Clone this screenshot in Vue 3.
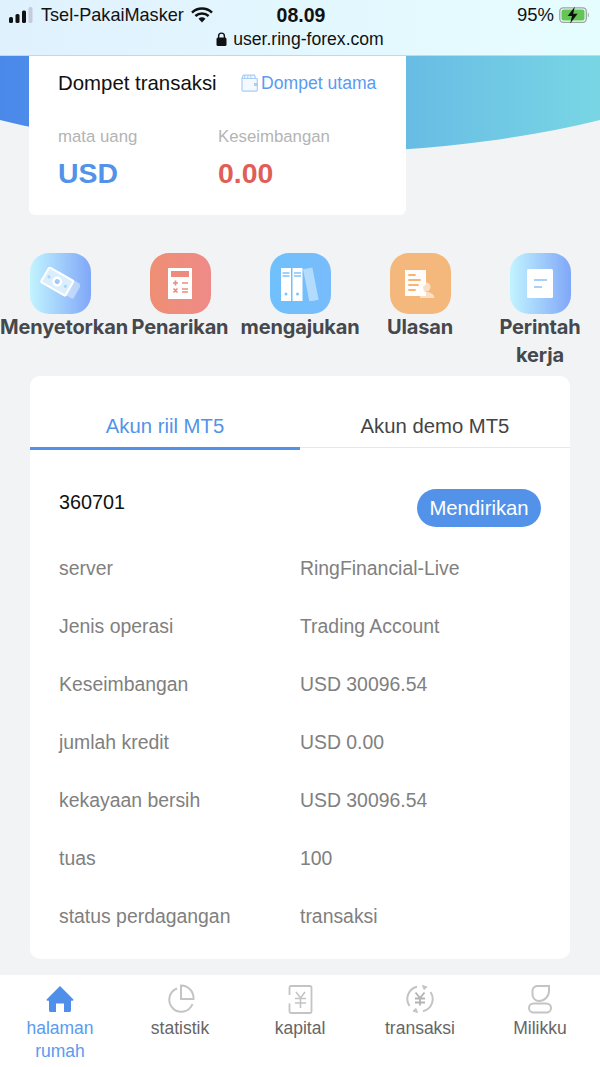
<script setup>
const actions = [
  { label: 'Menyetorkan', kind: 'cash' },
  { label: 'Penarikan', kind: 'calc' },
  { label: 'mengajukan', kind: 'file' },
  { label: 'Ulasan', kind: 'review' },
  { label: 'Perintah kerja', kind: 'order' }
]
const rows = [
  ['server', 'RingFinancial-Live'],
  ['Jenis operasi', 'Trading Account'],
  ['Keseimbangan', 'USD 30096.54'],
  ['jumlah kredit', 'USD 0.00'],
  ['kekayaan bersih', 'USD 30096.54'],
  ['tuas', '100'],
  ['status perdagangan', 'transaksi']
]
</script>

<template>
  <div class="page">
    <header class="browser">
      <div class="status">
        <div class="carrier">
          <svg class="signal" width="26" height="18" viewBox="0 0 26 18">
            <rect x="0" y="11" width="4" height="6" rx="1.5" fill="#111" />
            <rect x="6.5" y="8" width="4" height="9" rx="1.5" fill="#111" />
            <rect x="13" y="4.500" width="4" height="12.500" rx="1.500" fill="#111" />
            <rect x="19.500" y="1" width="4" height="16" rx="1.500" fill="#c3ccd8" />
          </svg>
          <span>Tsel-PakaiMasker</span>
          <svg class="wifi" width="22" height="16" viewBox="0 0 22 16">
            <path d="M1 5.600a14.500 14.500 0 0 1 20 0M4.400 9a9.700 9.700 0 0 1 13.200 0" fill="none" stroke="#111" stroke-width="2.500" />
            <path d="M7.500 11.700a5 5 0 0 1 7 0L11 15.500z" fill="#111" />
          </svg>
        </div>
        <span class="clock">08.09</span>
        <div class="power">
          <span>95%</span>
          <svg width="32" height="18" viewBox="0 0 32 18">
            <rect x="0.800" y="1.800" width="26.500" height="14.500" rx="3.500" fill="none" stroke="#9aa5a0" stroke-width="1.300" />
            <rect x="2.500" y="3.500" width="23" height="11" rx="2" fill="#62c554" />
            <path d="M28.800 6.500c1.400.4 1.400 4.600 0 5z" fill="#9aa5a0" />
            <path d="M15.800 0.800 8.600 10h4.400l-1.800 7.500 7.400-9.700h-4.400z" fill="#111" />
          </svg>
        </div>
      </div>
      <div class="address">
        <svg width="11" height="14" viewBox="0 0 11 14">
          <path d="M2.600 6V4a2.900 2.900 0 0 1 5.800 0v2" fill="none" stroke="#111" stroke-width="1.400" />
          <rect x="0.500" y="5.500" width="10" height="8.500" rx="1.500" fill="#111" />
        </svg>
        <span>user.ring-forex.com</span>
      </div>
    </header>

    <section class="hero">
      <div class="wallet">
        <div class="wallet-head">
          <span class="wallet-title">Dompet transaksi</span>
          <span class="wallet-link">
            <svg width="17" height="18" viewBox="0 0 17 18">
              <path d="M1 4.500h14.500a.8.8 0 0 1 .8.800v11a.8.8 0 0 1-.8.800H2a1 1 0 0 1-1-1zM1 4.500 1.800 2a1.200 1.200 0 0 1 1.200-.800h10.500l1 3.300" fill="#f3f9ff" stroke="#a9cdf5" stroke-width="1.200" />
              <path d="M4 1.500 3.500 4M7 1.500 6.600 4M10 1.500 9.800 4" stroke="#a9cdf5" stroke-width="1" />
              <rect x="13" y="9" width="3.500" height="3" fill="#a9cdf5" />
            </svg>
            Dompet utama
          </span>
        </div>
        <div class="wallet-stats">
          <div class="stat stat-currency">
            <span class="stat-label">mata uang</span>
            <span class="stat-value blue">USD</span>
          </div>
          <div class="stat">
            <span class="stat-label">Keseimbangan</span>
            <span class="stat-value red">0.00</span>
          </div>
        </div>
      </div>
    </section>

    <nav class="actions">
      <div v-for="a in actions" :key="a.label" class="action">
        <div class="tile" :class="'tile-' + a.kind">
          <svg v-if="a.kind === 'cash'" width="40" height="34" viewBox="0 0 40 34">
            <g transform="rotate(30 25 19)">
              <rect x="11" y="10" width="27" height="16" rx="1" fill="#fff" opacity=".4" stroke="#fff" stroke-width="1" />
            </g>
            <g transform="rotate(30 17 15)">
              <rect x="3" y="6" width="28" height="17" rx="1" fill="#dbeefe" stroke="#fff" stroke-width="2" />
              <circle cx="17" cy="14.500" r="5" fill="#fff" />
              <circle cx="17" cy="14.500" r="2.500" fill="#9cc9f8" />
              <circle cx="7.500" cy="14.500" r="1.600" fill="#a9d4fb" />
              <circle cx="26.500" cy="14.500" r="1.600" fill="#a9d4fb" />
            </g>
          </svg>
          <svg v-else-if="a.kind === 'calc'" width="24" height="31" viewBox="0 0 24 31">
            <rect width="24" height="31" fill="#fff" />
            <rect x="3" y="3" width="18" height="6" fill="#ee8b7c" />
            <path d="M5 15h5M7.500 12.500v5M14 15h6M5.500 20.500l4 4M9.500 20.500l-4 4M14 21h6M14 24h6" stroke="#ee8b7c" stroke-width="1.700" />
          </svg>
          <svg v-else-if="a.kind === 'file'" width="38" height="34" viewBox="0 0 38 34">
            <rect x="0" y="1" width="10" height="33" fill="#fff" />
            <rect x="11.500" y="1" width="10" height="33" fill="#fff" />
            <rect x="25" y="1" width="9.500" height="33" fill="#fff" opacity=".45" transform="rotate(-11 30 17)" />
            <path d="M1.500 6h7M1.500 9h7M13 6h7M13 9h7" stroke="#7cc4fa" stroke-width="1.300" />
            <circle cx="5" cy="27" r="1.500" fill="#7cc4fa" />
            <circle cx="16.500" cy="27" r="1.500" fill="#7cc4fa" />
          </svg>
          <svg v-else-if="a.kind === 'review'" width="30" height="28" viewBox="0 0 30 28">
            <path d="M0 0h21v14l-3 3 1 4 2 1v4H0z" fill="#fff" opacity=".96" />
            <path d="M4 5h6M4 10h11M4 15h9M4 20h6" stroke="#f4b676" stroke-width="1.800" stroke-linecap="round" />
            <circle cx="21" cy="17" r="4.500" fill="#fff" opacity=".55" />
            <path d="M15 28c0-5 3-6 6-6s8 1 8.500 6z" fill="#fff" opacity=".55" />
          </svg>
          <svg v-else width="26" height="29" viewBox="0 0 26 29">
            <rect width="26" height="29" rx="1.500" fill="#fff" />
            <path d="M7 11h13M7 18h8" stroke="#a9cffb" stroke-width="2" />
          </svg>
        </div>
        <span class="action-label">{{ a.label }}</span>
      </div>
    </nav>

    <main class="account">
      <div class="tabs">
        <div class="tab active">Akun riil MT5</div>
        <div class="tab">Akun demo MT5</div>
      </div>
      <div class="account-head">
        <span class="account-id">360701</span>
        <span class="pill">Mendirikan</span>
      </div>
      <div v-for="r in rows" :key="r[0]" class="row">
        <span class="row-label">{{ r[0] }}</span>
        <span class="row-value">{{ r[1] }}</span>
      </div>
    </main>

    <footer class="tabbar">
      <div class="nav-item current">
        <svg width="30" height="30" viewBox="0 0 30 30">
          <path d="M15 2 1.800 15.200c-.6.700-.2 1.500.7 1.500H4v9.800c0 .8.700 1.500 1.500 1.500H11v-8.500h8V28h5.500c.8 0 1.500-.7 1.500-1.500v-9.800h1.500c.9 0 1.300-.8.700-1.500z" fill="#4f8fea" />
        </svg>
        <span>halaman rumah</span>
      </div>
      <div class="nav-item">
        <svg width="30" height="30" viewBox="0 0 30 30" fill="none" stroke="#c4c4c4" stroke-width="2">
          <path d="M12 4.500a12 12 0 1 0 15.500 15.500" />
          <path d="M16 1.500a12.500 12.500 0 0 1 12.500 13.500H16z" />
        </svg>
        <span>statistik</span>
      </div>
      <div class="nav-item">
        <svg width="30" height="30" viewBox="0 0 30 30" fill="none" stroke="#c4c4c4" stroke-width="1.800">
          <path d="M6 2h19a1.500 1.500 0 0 1 1.500 1.500v24a1.500 1.500 0 0 1-1.500 1.500H6a1.500 1.500 0 0 1-1.500-1.500v-8M4.500 11V3.500A1.500 1.500 0 0 1 6 2" />
          <path d="M11 8l4.500 6 4.500-6M10 14.500h11M10 19h11M15.500 14v10" stroke-width="1.600" />
        </svg>
        <span>kapital</span>
      </div>
      <div class="nav-item">
        <svg width="30" height="30" viewBox="0 0 30 30" fill="none" stroke="#c4c4c4" stroke-width="2">
          <path d="M4.500 22A12.500 12.500 0 0 1 12 2.800" />
          <path d="M25.500 8A12.500 12.500 0 0 1 18 27.200" />
          <path d="M17.500 1.500 22 3l-3 2.500zM12.500 28.500 8 27l3-2.500z" fill="#c4c4c4" stroke-width="1" />
          <path d="M10.500 8.500 15 14l4.500-5.500M10 14.500h10M10 18.500h10M15 14v7.500" stroke="#b4b4b4" stroke-width="1.800" />
        </svg>
        <span>transaksi</span>
      </div>
      <div class="nav-item">
        <svg width="30" height="30" viewBox="0 0 30 30" fill="none" stroke="#c4c4c4" stroke-width="2">
          <path d="M12 2h12v5a10 10 0 0 1-10 10 6.500 6.500 0 0 1-6.500-6.500V7A5 5 0 0 1 12 2z" />
          <rect x="4" y="19.500" width="22" height="9" rx="4.500" />
        </svg>
        <span>Milikku</span>
      </div>
    </footer>
  </div>
</template>

<style scoped>
.page {
  width: 600px;
  height: 1067px;
  display: flex;
  flex-direction: column;
  overflow: hidden;
  background: #f2f3f5;
  font-family: "Liberation Sans", Arial, sans-serif;
}
.browser {
  height: 56px;
  box-sizing: border-box;
  flex: none;
  background: linear-gradient(90deg, #e0f1fe, #e6fdff);
  border-bottom: 1px solid #cbd6dc;
  color: #111;
  position: relative;
  z-index: 1;
}
.status {
  height: 30px;
  padding: 0 9px 0 9px;
  display: flex;
  align-items: center;
  justify-content: space-between;
  font-size: 18.100px;
  position: relative;
}
.carrier {
  display: flex;
  align-items: center;
  gap: 6px;
}
.wifi { margin-left: 1px; }
.clock {
  position: absolute;
  left: 258px;
  width: 86px;
  text-align: center;
  font-size: 19.500px;
  font-weight: 700;
}
.power {
  display: flex;
  align-items: center;
  gap: 5px;
  font-size: 18.500px;
}
.address {
  display: flex;
  align-items: center;
  justify-content: center;
  gap: 6px;
  font-size: 17.600px;
  line-height: 18px;
}
.hero {
  height: 159px;
  flex: none;
  position: relative;
  padding-left: 29px;
}
.hero::before {
  content: "";
  position: absolute;
  left: -200px;
  right: -200px;
  top: -233px;
  height: 330px;
  border-radius: 0 0 50% 50%;
  background: linear-gradient(90deg, #4a88ea 200px, #68bce4 606px, #78d6e4 800px);
}
.wallet {
  position: relative;
  width: 377px;
  height: 159px;
  box-sizing: border-box;
  padding: 15px 29px 0;
  background: #fff;
  border-radius: 0 0 6px 6px;
}
.wallet-head {
  display: flex;
  align-items: center;
  height: 24px;
}
.wallet-title {
  width: 183px;
  font-size: 20.400px;
  color: #111;
}
.wallet-link {
  display: flex;
  align-items: center;
  gap: 3px;
  font-size: 17.600px;
  color: #5a9bf0;
  white-space: nowrap;
}
.wallet-stats {
  display: flex;
  margin-top: 32px;
}
.stat {
  display: flex;
  flex-direction: column;
}
.stat-currency { width: 160px; }
.stat-label {
  font-size: 16.800px;
  line-height: 20px;
  color: #b4b4b4;
}
.stat-value {
  margin-top: 10px;
  font-size: 28.400px;
  line-height: 32px;
  font-weight: 700;
}
.blue { color: #5293e9; }
.red { color: #df5e58; }
.actions {
  display: grid;
  grid-template-columns: repeat(5, 120px);
  margin-top: 38px;
  height: 123px;
  flex: none;
}
.action {
  display: flex;
  flex-direction: column;
  align-items: center;
}
.tile {
  width: 61px;
  height: 61px;
  flex: none;
  border-radius: 19px;
  display: flex;
  align-items: center;
  justify-content: center;
}
.tile-cash, .tile-order { background: linear-gradient(90deg, #c2f4ff, #80a7f8); }
.tile-calc { background: linear-gradient(90deg, #ee8f74, #ee8b88); }
.tile-file { background: linear-gradient(90deg, #6fc0fb, #78bcfc); }
.tile-review { background: #f4b87c; }
.action-label {
  width: min-content;
  margin-top: -1px;
  text-align: center;
  font-family: Inter, "Liberation Sans", sans-serif;
  font-size: 20px;
  line-height: 28px;
  font-weight: 700;
  color: #45484d;
  letter-spacing: -0.150px;
}
.action:first-child .action-label {
  margin-left: 8px;
}
.account {
  margin: 0 30px;
  height: 583px;
  flex: none;
  background: #fff;
  border-radius: 10px;
}
.tabs {
  display: flex;
  height: 72px;
  box-sizing: border-box;
  padding-top: 32px;
  border-bottom: 1px solid #e6e8ea;
}
.tab {
  flex: 1;
  text-align: center;
  font-size: 20.300px;
  line-height: 36px;
  color: #444;
  height: 39px;
}
.tab.active {
  color: #5293e9;
  border-bottom: 3px solid #5293e9;
}
.account-head {
  height: 91px;
  padding: 0 29px;
  display: flex;
  justify-content: space-between;
  color: #111;
}
.account-id {
  margin-top: 42px;
  font-size: 19.800px;
  line-height: 24px;
}
.pill {
  margin-top: 41px;
  width: 124px;
  height: 38px;
  border-radius: 19px;
  background: #5293e9;
  color: #fff;
  text-align: center;
  font-size: 20.300px;
  line-height: 38px;
}
.row {
  height: 58px;
  display: flex;
  align-items: center;
  padding-left: 29px;
  font-size: 19.400px;
  color: #808080;
}
.row-label { width: 241px; }
.tabbar {
  flex: 1;
  margin-top: 16px;
  background: #fff;
  display: grid;
  grid-template-columns: repeat(5, 120px);
}
.nav-item {
  display: flex;
  flex-direction: column;
  align-items: center;
  padding-top: 9px;
  text-align: center;
  font-size: 17.500px;
  line-height: 23px;
  color: #666;
}
.nav-item span {
  width: 90px;
  margin-top: 3px;
}
.nav-item.current { color: #5a9bf0; }
</style>
